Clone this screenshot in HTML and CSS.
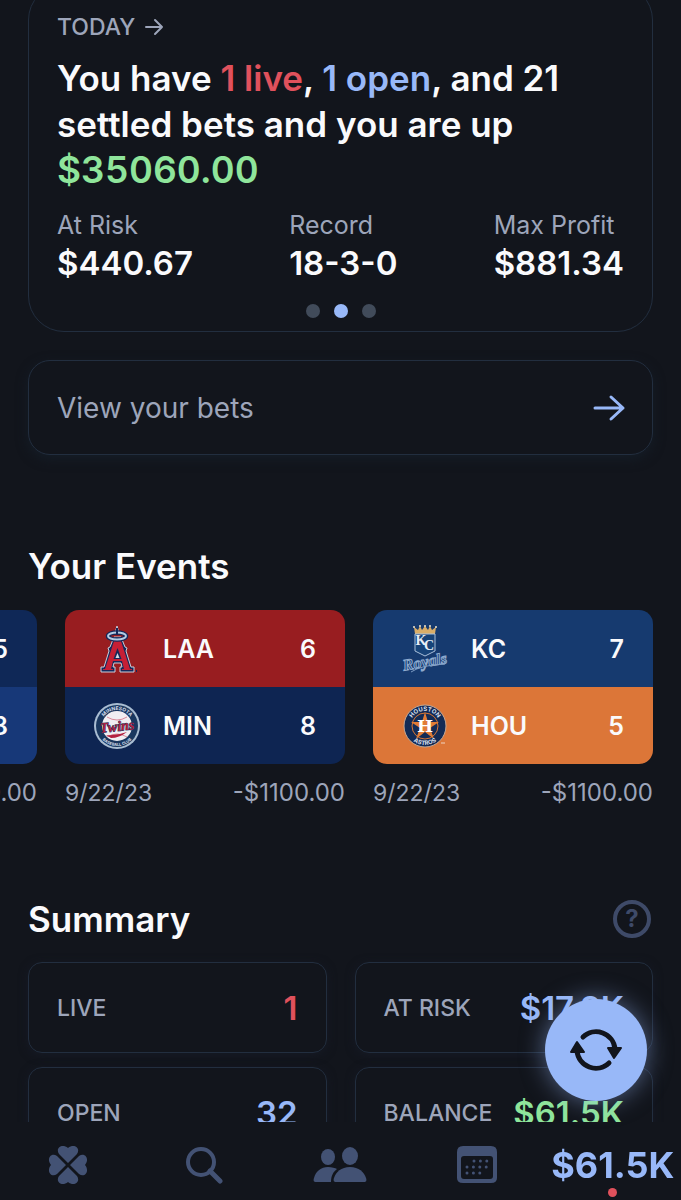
FILE: index.html
```html
<!DOCTYPE html>
<html lang="en">
<head>
  <meta charset="UTF-8">
  <meta name="viewport" content="width=device-width, initial-scale=1.0">
  <meta name="theme-color" content="#12151c">
  <title>My Bets</title>
  <link rel="stylesheet" href="styles.css">
</head>
<body>
  <main>
    <section class="card today">
      <a href="#today" class="today-link">TODAY
        <svg width="20" height="18" viewBox="0 0 20 18"><path d="M2 9h16M11 2l7 7-7 7" /></svg>
      </a>
      <h1>You have <span class="red">1 live</span>, <span class="blue">1 open</span>, and 21 settled bets and you are up <span class="green total">$35060.00</span></h1>
      <dl class="stats">
        <div><dt>At Risk</dt><dd>$440.67</dd></div>
        <div><dt>Record</dt><dd>18-3-0</dd></div>
        <div><dt>Max Profit</dt><dd>$881.34</dd></div>
      </dl>
      <div class="dots">
        <button aria-label="Slide 1"></button>
        <button class="active" aria-label="Slide 2"></button>
        <button aria-label="Slide 3"></button>
      </div>
    </section>

    <a href="#bets" class="card view-bets">View your bets
      <svg width="34" height="28" viewBox="0 0 34 28"><path d="M3 14h28M19 3l12 11-12 11" /></svg>
    </a>

    <h2>Your Events</h2>
    <div class="events">
      <article class="event">
        <div class="teams">
          <div class="team navy"><b class="score">5</b></div>
          <div class="team royal"><b class="score">8</b></div>
        </div>
        <p><span>9/22/23</span><span class="amount">-$1100.00</span></p>
      </article>
      <article class="event">
        <div class="teams">
          <div class="team laa">
            <svg class="logo" viewBox="0 0 48 48">
              <path d="M21 12h7l4 10 2 1-1 3 5 16h3v5H27v-5h2l-1-4h-7l-1 4h2v5H8v-5h3l5-16-1-3 2-1z" fill="#15285a" stroke="#c9d0dc" stroke-width="1" />
              <path d="M22 13h5l10 31h2v1H29v-1h2l-2-8h-9l-2 8h2v1H10v-1h2z" fill="#c61f35" />
              <path d="M24.500 23l4 11h-8z" fill="#15285a" />
              <path d="M24.500 28l2 5h-4z" fill="#d5dbe5" />
              <path d="M24 1l2 7h-4z" fill="#15285a" stroke="#c9d0dc" stroke-width="1" />
              <ellipse cx="24" cy="11" rx="9" ry="3.500" fill="none" stroke="#15285a" stroke-width="4.500" />
              <ellipse cx="24" cy="11" rx="9" ry="3.500" fill="none" stroke="#b4cbe3" stroke-width="2" />
              <path d="M24 3v7" stroke="#15285a" stroke-width="2" />
              <path d="M43 46h1" stroke="#15285a" stroke-width="2" />
            </svg>
            <b>LAA</b><b class="score">6</b>
          </div>
          <div class="team min">
            <svg class="logo" viewBox="0 0 48 48">
              <defs>
                <path id="minTop" d="M8 24a16 16 0 0 1 32 0" />
                <path id="minBottom" d="M4 24a20 20 0 0 0 40 0" />
              </defs>
              <circle cx="24" cy="24" r="23" fill="#a9bdd2" />
              <circle cx="24" cy="24" r="21" fill="#19375f" />
              <circle cx="24" cy="24" r="15" fill="#f0eef2" />
              <path d="M14 15q10 6 20 0M14 35q10-6 20 0" fill="none" stroke="#d8899a" stroke-width="1" />
              <text class="ring bold" font-size="5"><textPath href="#minTop" startOffset="50%">MINNESOTA</textPath></text>
              <text class="ring bold" font-size="4"><textPath href="#minBottom" startOffset="50%">BASEBALL CLUB</textPath></text>
              <text class="twins" x="24" y="29" transform="rotate(-6 24 24)">Twins</text>
              <path d="M13 33q10 1 21-3-8 6-16 6z" fill="#b3203f" />
            </svg>
            <b>MIN</b><b class="score">8</b>
          </div>
        </div>
        <p><span>9/22/23</span><span class="amount">-$1100.00</span></p>
      </article>
      <article class="event">
        <div class="teams">
          <div class="team kc">
            <svg class="logo" viewBox="0 0 48 48">
              <path d="M14 9L13 2l4 3 2-4 2 4 3-4 3 4 2-4 2 4 4-3-1 7z" fill="#d9ad68" />
              <g fill="#f1e5cb"><circle cx="13" cy="2" r="1" /><circle cx="19" cy="1" r="1" /><circle cx="24" cy="1" r="1" /><circle cx="29" cy="1" r="1" /><circle cx="35" cy="2" r="1" /></g>
              <path d="M14 9h20v17l-10 5-10-5z" fill="#174379" stroke="#a9bfda" stroke-width="1" />
              <text class="kc-mark" x="20" y="20">K</text>
              <text class="kc-mark" x="28" y="25">C</text>
              <text class="royals" x="24" y="42" transform="rotate(-10 24 38)">Royals</text>
              <path d="M10 47q10-7 34-8l1-4" fill="none" stroke="#7d9cc3" stroke-width="1" />
            </svg>
            <b>KC</b><b class="score">7</b>
          </div>
          <div class="team hou">
            <svg class="logo" viewBox="0 0 48 48">
              <defs>
                <path id="houTop" d="M9 24a15 15 0 0 1 30 0" />
                <path id="houBottom" d="M5 24a19 19 0 0 0 38 0" />
              </defs>
              <circle cx="24" cy="24" r="21" fill="#132b55" stroke="#c3a895" stroke-width="1" />
              <circle cx="24" cy="24" r="13" fill="none" stroke="#d87635" stroke-width="1" />
              <path d="M24 10l3 10h11l-9 6 4 11-9-7-9 7 4-11-9-6h11z" fill="#e17c36" />
              <text class="ring bold" font-size="6"><textPath href="#houTop" startOffset="50%">HOUSTON</textPath></text>
              <text class="ring bold" font-size="6"><textPath href="#houBottom" startOffset="50%">ASTROS</textPath></text>
              <text class="h-mark" x="24" y="30">H</text>
              <path d="M40 41h4" stroke="#efd3c0" stroke-width="1" />
            </svg>
            <b>HOU</b><b class="score">5</b>
          </div>
        </div>
        <p><span>9/22/23</span><span class="amount">-$1100.00</span></p>
      </article>
    </div>

    <div class="summary-head">
      <h2>Summary</h2>
      <button class="help" aria-label="Help">?</button>
    </div>
    <div class="summary">
      <div class="card tile"><span>LIVE</span><b class="red">1</b></div>
      <div class="card tile"><span>AT RISK</span><b class="blue">$17.8K</b></div>
      <div class="card tile"><span>OPEN</span><b class="blue">32</b></div>
      <div class="card tile"><span>BALANCE</span><b class="green">$61.5K</b></div>
    </div>
  </main>

  <button class="refresh" aria-label="Refresh">
    <svg width="54" height="46" viewBox="0 0 54 46">
      <path d="M14 10A19 19 0 0 1 46 22M40 36A19 19 0 0 1 8 24" fill="none" stroke="#12151c" stroke-width="5" stroke-linecap="round" />
      <path d="M39 21h13l-7 10zM2 25h13L8 15z" fill="#12151c" stroke="#12151c" stroke-width="2" stroke-linejoin="round" />
    </svg>
  </button>

  <nav>
    <a href="#home" aria-label="Home">
      <svg width="40" height="40" viewBox="0 0 40 40">
        <defs><path id="leaf" d="M20 18L11 9C7 3 14-2 20 3c6-5 13 0 9 6z" /></defs>
        <use href="#leaf" />
        <use href="#leaf" transform="rotate(90 20 20)" />
        <use href="#leaf" transform="rotate(180 20 20)" />
        <use href="#leaf" transform="rotate(270 20 20)" />
      </svg>
    </a>
    <a href="#search" aria-label="Search">
      <svg width="38" height="38" viewBox="0 0 38 38"><path d="M25 25l10 10" stroke-width="5" stroke-linecap="round" /><circle cx="16" cy="16" r="13" fill="none" stroke-width="4" /></svg>
    </a>
    <a href="#friends" aria-label="Friends">
      <svg width="54" height="36" viewBox="0 0 54 36">
        <ellipse cx="15" cy="10" rx="7" ry="8" /><ellipse cx="37" cy="9" rx="8" ry="9" />
        <path d="M24 22c-4 3-6 7-6 13H3c-2 0-3-1-2-4 2-7 7-11 14-11 4 0 7 1 9 2z" />
        <path d="M37 20c9 0 14 5 16 11 1 3 0 4-2 4H23c-2 0-3-1-2-4 2-6 7-11 16-11z" />
      </svg>
    </a>
    <a href="#calendar" aria-label="Calendar">
      <svg width="40" height="38" viewBox="0 0 40 38">
        <path fill-rule="evenodd" d="M6 0h28q6 0 6 6v26q0 5-6 5H6q-6 0-6-5V6q0-6 6-6zM7 10q-3 0-3 3v17q0 3 3 3h26q3 0 3-3V13q0-3-3-3z" />
        <path d="M17 15h16M10 21h22M10 27h16" fill="none" stroke-width="3" stroke-linecap="round" stroke-dasharray="0 6.4" />
      </svg>
    </a>
    <a href="#balance" class="balance">$61.5K</a>
  </nav>
</body>
</html>
```

FILE: styles.css
```css
* { box-sizing: border-box; }
body { font-family: Inter, "Liberation Sans", sans-serif; margin: 0; height: 100vh; display: flex; flex-direction: column; overflow: hidden; background: #12151c; color: #fafafc; }
a { color: inherit; text-decoration: none; }
button { font: inherit; border: 0; padding: 0; cursor: pointer; }
h1, h2, p, dl, dd { margin: 0; }
svg { display: block; flex: none; }

.red { color: #e0515c; }
.blue { color: #98b8f8; }
.green { color: #8fe59b; }

main { flex: 1; min-height: 0; overflow: hidden; padding: 0 28px; }
.card { border: 1px solid #222e3f; border-radius: 18px; }

/* top card is scrolled partly out of view */
.today { margin-top: -16px; padding: 28px 28px 13px; border-radius: 36px; }
.today-link { display: flex; align-items: center; gap: 9px; font-size: 23px; line-height: 28px; font-weight: 500; color: #9da5ba; }
.today-link svg { fill: none; stroke: #9da5ba; stroke-width: 2; stroke-linecap: round; stroke-linejoin: round; }
h1 { margin-top: 14px; font-size: 35px; line-height: 46px; font-weight: 600; }
.total { font-size: 37px; line-height: 44px; font-variant-numeric: tabular-nums; }
.stats { display: flex; justify-content: space-between; margin-top: 16px; }
.stats dt { font-size: 25px; line-height: 32px; color: #9da5ba; }
.stats dd { font-size: 33px; line-height: 44px; font-weight: 600; }
.dots { display: flex; justify-content: center; gap: 14px; margin-top: 19px; }
.dots button { width: 14px; height: 14px; border-radius: 50%; background: #414b5a; }
.dots .active { background: #98b8f8; }

.view-bets { display: flex; justify-content: space-between; align-items: center; margin-top: 28px; height: 95px; padding: 0 26px 0 28px; border-radius: 22px; font-size: 28px; color: #9da5ba; box-shadow: 0 4px 12px #151d27; }
.view-bets svg { fill: none; stroke: #98b8f8; stroke-width: 3; stroke-linecap: round; stroke-linejoin: round; }

h2 { font-size: 35px; line-height: 46px; font-weight: 600; }
.view-bets + h2 { margin-top: 88px; }

.events { display: flex; justify-content: flex-end; gap: 28px; margin: 21px -28px 0; padding-right: 28px; overflow: hidden; }
.event { flex: none; width: 280px; }
.teams { border-radius: 14px; overflow: hidden; }
.team { display: flex; align-items: center; height: 77px; padding: 0 29px 0 28px; font-size: 25px; }
.team b { font-weight: 600; }
.team .score { margin-left: auto; }
.logo { width: 48px; height: 48px; margin-right: 22px; }
.navy { background: #0f2857; }
.royal { background: #173878; }
.laa { background: #981d20; }
.min { background: #0e2552; }
.kc { background: #163a6f; }
.hou { background: #dc7638; }
.event p { display: flex; justify-content: space-between; margin-top: 13px; font-size: 23px; line-height: 32px; color: #9da5ba; }
.event .amount { font-size: 24px; }

.ring { fill: #d5deeb; text-anchor: middle; }
.bold { font-weight: 700; }
.twins { font: italic 700 14px "Liberation Serif", serif; fill: #b3203f; stroke: #19375f; stroke-width: 1; paint-order: stroke; text-anchor: middle; }
.kc-mark { font: 700 14px "Liberation Serif", serif; fill: #e7edf5; text-anchor: middle; }
.royals { font: italic 700 16px "Liberation Serif", serif; fill: #174379; stroke: #8fabcf; stroke-width: 1; text-anchor: middle; }
.h-mark { font: 700 17px "DejaVu Serif", serif; fill: #fff; text-anchor: middle; }

.summary-head { display: flex; justify-content: space-between; align-items: center; margin-top: 87px; }
.help { width: 38px; height: 38px; margin-right: 2px; border: 4px solid #3e4a68; border-radius: 50%; background: none; color: #3e4a68; font-size: 24px; line-height: 30px; font-weight: 700; }
.summary { display: grid; grid-template-columns: 1fr 1fr; gap: 14px 28px; margin-top: 20px; }
.tile { display: flex; justify-content: space-between; align-items: center; height: 91px; padding: 0 28px; border-radius: 14px; box-shadow: 0 2px 10px #161a25; }
.tile span { font-size: 23px; font-weight: 500; color: #9da5ba; }
.tile b { font-size: 33px; font-weight: 600; }

.refresh { position: fixed; right: 34px; bottom: 99px; width: 102px; height: 102px; display: flex; align-items: center; justify-content: center; border-radius: 50%; background: #98b8f8; box-shadow: 0 0 24px #98b8f880; }

nav { flex: none; display: grid; grid-template-columns: repeat(5, 1fr); height: 78px; background: #12151c; }
nav a { display: flex; align-items: center; justify-content: center; padding-top: 8px; position: relative; }
nav svg { fill: #435274; stroke: none; }
nav svg [stroke-width] { stroke: #435274; }
.balance { color: #98b8f8; font-size: 36px; font-weight: 700; }
.balance::after { content: ""; position: absolute; bottom: 3px; width: 9px; height: 9px; border-radius: 50%; background: #e0515c; }
```
